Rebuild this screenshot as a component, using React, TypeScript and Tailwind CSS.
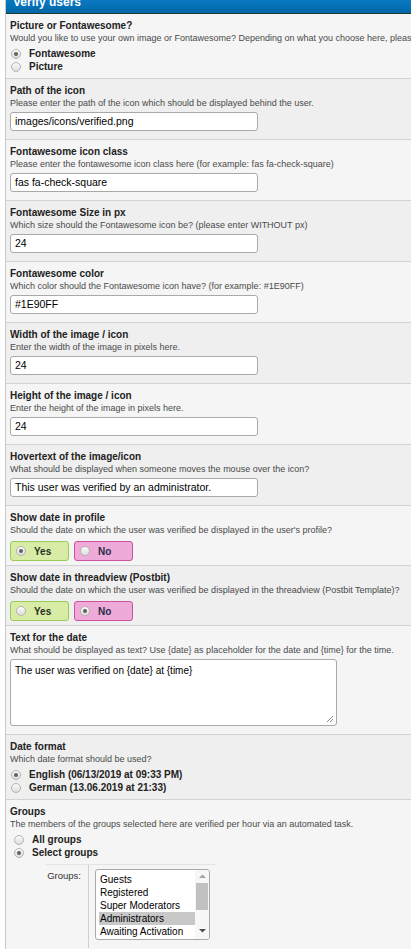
import React from 'react'

const Radio = ({ checked }: { checked?: boolean }) => (
  <span className="inline-flex h-[10px] w-[10px] shrink-0 items-center justify-center rounded-full border border-[#b4b4b4] bg-gradient-to-b from-[#fafafa] to-[#dedede]">
    {checked && <span className="h-[4px] w-[4px] rounded-full bg-[#606060]" />}
  </span>
)

const Row = ({
  title,
  desc,
  shade,
  pb = 'pb-[8px]',
  children,
}: {
  title: string
  desc: string
  shade?: boolean
  pb?: string
  children: React.ReactNode
}) => (
  <div
    className={`border-b border-[#d2d2d2] pl-[4px] pt-[6px] ${pb} ${shade ? 'bg-[#efefef]' : 'bg-[#f5f5f5]'}`}
  >
    <div className="text-[10px] font-bold leading-[12px] text-[#222]">{title}</div>
    <div className="whitespace-nowrap text-[9px] leading-[12px] text-[#4a4a4a]">{desc}</div>
    {children}
  </div>
)

const TextInput = ({ value }: { value: string }) => (
  <div className="mt-[3px] flex h-[19px] w-[248px] items-center rounded-[3px] border border-[#a9a9a9] bg-white pl-[4px] text-[10.5px] text-black">
    {value}
  </div>
)

const RadioList = ({ items, checked, indent }: { items: string[]; checked: number; indent?: boolean }) => (
  <div className={`mt-[3px] ${indent ? 'pl-[4px]' : 'pl-[1px]'}`}>
    {items.map((label, i) => (
      <div key={label} className="flex h-[13px] items-center gap-[8px]">
        <Radio checked={i === checked} />
        <span className="text-[10px] font-bold text-[#222]">{label}</span>
      </div>
    ))}
  </div>
)

const YesNo = ({ yes }: { yes: boolean }) => (
  <div className="mt-[5px] flex gap-[5px]">
    <div className="flex h-[20px] w-[59px] items-center rounded-[3px] border border-[#9acb58] bg-[#d8eca6] pl-[5px]">
      <Radio checked={yes} />
      <span className="ml-[8px] text-[10px] font-bold text-[#263024]">Yes</span>
    </div>
    <div className="flex h-[20px] w-[59px] items-center rounded-[3px] border border-[#cd519c] bg-[#eeaad8] pl-[5px]">
      <Radio checked={!yes} />
      <span className="ml-[8px] text-[10px] font-bold text-[#2a2d4a]">No</span>
    </div>
  </div>
)

const groups = ['Guests', 'Registered', 'Super Moderators', 'Administrators', 'Awaiting Activation', 'Banned']

export default function App() {
  return (
    <div className="h-[949px] w-[411px] overflow-hidden bg-white pl-[5px] font-['Liberation_Sans',Arial,sans-serif]">
      <div className="w-[800px] border-l border-[#c8c8c8]">
        {/* table head */}
        <div className="h-[14px] overflow-hidden border-b border-[#1f3a2c] bg-gradient-to-b from-[#0a79c3] to-[#0067a7]">
          <div className="-mt-[4px] pl-[7px] text-[12px] font-bold leading-[12px] text-white">Verify users</div>
        </div>

        <Row
          title="Picture or Fontawesome?"
          desc="Would you like to use your own image or Fontawesome? Depending on what you choose here, please enter the path or the icon class below."
          pb="pb-[5px]"
        >
          <RadioList items={['Fontawesome', 'Picture']} checked={0} />
        </Row>

        <Row title="Path of the icon" desc="Please enter the path of the icon which should be displayed behind the user." shade>
          <TextInput value="images/icons/verified.png" />
        </Row>

        <Row
          title="Fontawesome icon class"
          desc="Please enter the fontawesome icon class here (for example: fas fa-check-square)"
        >
          <TextInput value="fas fa-check-square" />
        </Row>

        <Row
          title="Fontawesome Size in px"
          desc="Which size should the Fontawesome icon be? (please enter WITHOUT px)"
          shade
        >
          <TextInput value="24" />
        </Row>

        <Row
          title="Fontawesome color"
          desc="Which color should the Fontawesome icon have? (for example: #1E90FF)"
        >
          <TextInput value="#1E90FF" />
        </Row>

        <Row title="Width of the image / icon" desc="Enter the width of the image in pixels here." shade>
          <TextInput value="24" />
        </Row>

        <Row title="Height of the image / icon" desc="Enter the height of the image in pixels here.">
          <TextInput value="24" />
        </Row>

        <Row
          title="Hovertext of the image/icon"
          desc="What should be displayed when someone moves the mouse over the icon?"
          shade
        >
          <TextInput value="This user was verified by an administrator." />
        </Row>

        <Row
          title="Show date in profile"
          desc="Should the date on which the user was verified be displayed in the user's profile?"
          pb="pb-[4px]"
        >
          <YesNo yes />
        </Row>

        <Row
          title="Show date in threadview (Postbit)"
          desc="Should the date on which the user was verified be displayed in the threadview (Postbit Template)?"
          shade
          pb="pb-[4px]"
        >
          <YesNo yes={false} />
        </Row>

        <Row
          title="Text for the date"
          desc="What should be displayed as text? Use {date} as placeholder for the date and {time} for the time."
        >
          <div className="relative mt-[3px] h-[67px] w-[327px] rounded-[3px] border border-[#a9a9a9] bg-white pl-[4px] pt-[4px] text-[10px] leading-[13px] text-black">
            The user was verified on {'{date}'} at {'{time}'}
            <svg className="absolute bottom-[2px] right-[2px]" width="8" height="8" viewBox="0 0 8 8">
              <path d="M7 1 L1 7 M7 4 L4 7 M7 6.5 L6.5 7" stroke="#8a8a8a" strokeWidth="1" />
            </svg>
          </div>
        </Row>

        <Row title="Date format" desc="Which date format should be used?" shade pb="pb-[5px]">
          <RadioList items={['English (06/13/2019 at 09:33 PM)', 'German (13.06.2019 at 21:33)']} checked={0} />
        </Row>

        <Row
          title="Groups"
          desc="The members of the groups selected here are verified per hour via an automated task."
          pb="pb-[20px]"
        >
          <RadioList items={['All groups', 'Select groups']} checked={1} indent />
          <div className="ml-[36px] mt-[5px] flex w-[170px] border-t border-[#e4e4e4]">
            <div className="w-[43px] border-r border-[#cfcfcf] pr-[7px] pt-[5px] text-right text-[9.5px] leading-[12px] text-[#333]">
              Groups:
            </div>
            <div className="pb-[8px] pl-[6px] pt-[4px]">
              <div className="flex h-[71px] w-[115px] overflow-hidden rounded-[3px] border border-[#a9a9a9] bg-white">
                <div className="flex-1 overflow-hidden pl-[3px] pt-[3px]">
                  {groups.map((g) => (
                    <div
                      key={g}
                      className={`h-[13px] pl-[1px] text-[10px] leading-[13px] text-black ${g === 'Administrators' ? 'bg-[#c8c8c8]' : ''}`}
                    >
                      {g}
                    </div>
                  ))}
                </div>
                <div className="flex w-[14px] flex-col items-center bg-[#f7f7f7] pt-[4px]">
                  <svg width="7" height="5" viewBox="0 0 7 5">
                    <path d="M0 4 L3.5 0.5 L7 4 Z" fill="#a3a3a3" />
                  </svg>
                  <div className="mt-[4px] h-[27px] w-[12px] bg-[#c1c1c1]" />
                  <div className="flex-1" />
                  <svg className="mb-[6px]" width="7" height="5" viewBox="0 0 7 5">
                    <path d="M0 1 L3.5 4.5 L7 1 Z" fill="#505050" />
                  </svg>
                </div>
              </div>
            </div>
          </div>
        </Row>
      </div>
    </div>
  )
}
